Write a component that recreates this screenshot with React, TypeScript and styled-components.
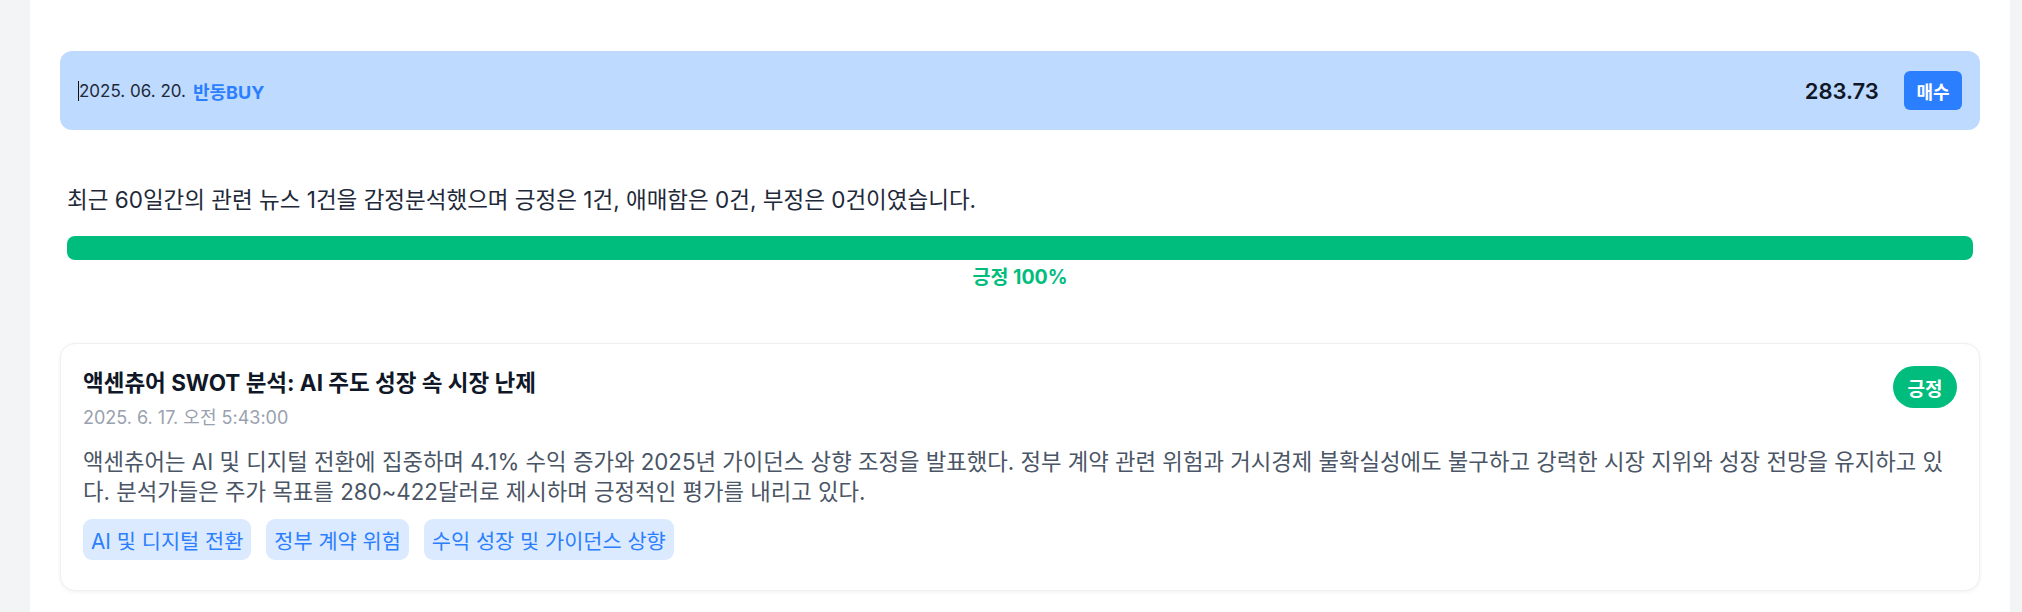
import React from "react";
import styled, { createGlobalStyle } from "styled-components";

const GlobalStyle = createGlobalStyle`
  html, body {
    margin: 0;
    padding: 0;
    background: #f3f4f6;
    font-family: Inter, "Noto Sans CJK KR", sans-serif;
  }
  * { box-sizing: border-box; }
`;

const Page = styled.div`
  display: flex;
  padding: 0 12px 0 30px;
  height: 612px;
  overflow: hidden;
`;

const Panel = styled.main`
  flex: 1;
  background: #ffffff;
  padding: 51px 30px 0 30px;
`;

const SignalBar = styled.div`
  display: flex;
  align-items: center;
  justify-content: space-between;
  height: 79px;
  padding: 0 18px 0 18px;
  border-radius: 12px;
  background: #bedbff;
`;

const SignalLeft = styled.div`
  display: flex;
  align-items: center;
`;

const Caret = styled.span`
  display: inline-block;
  width: 1px;
  height: 20px;
  background: #111;
`;

const SignalDate = styled.span`
  font-size: 17px;
  color: #1e2939;
`;

const SignalName = styled.span`
  margin-left: 7px;
  font-size: 18px;
  font-weight: 700;
  color: #2b7fff;
`;

const SignalRight = styled.div`
  display: flex;
  align-items: center;
  gap: 25px;
`;

const Price = styled.span`
  font-size: 22px;
  font-weight: 600;
  color: #101828;
`;

const ActionBadge = styled.span`
  display: inline-flex;
  align-items: center;
  justify-content: center;
  height: 39px;
  padding: 0 12.5px;
  border-radius: 6px;
  background: #2b7fff;
  color: #ffffff;
  font-size: 18px;
  font-weight: 700;
`;

const Summary = styled.section`
  margin-top: 55px;
  padding: 0 7px;
`;

const SummaryText = styled.p`
  margin: 0;
  font-size: 22.5px;
  line-height: 30px;
  color: #1e2939;
`;

const Track = styled.div`
  margin-top: 21px;
  height: 24px;
  border-radius: 8px;
  background: #e5e7eb;
  display: flex;
  overflow: hidden;
`;

const Fill = styled.div<{ $color: string }>`
  height: 100%;
  background: ${(p) => p.$color};
`;

const RatioLabel = styled.div`
  margin-top: 5px;
  text-align: center;
  font-size: 19.5px;
  line-height: 24px;
  font-weight: 700;
  color: #00bc7d;
`;

const NewsCard = styled.article`
  margin-top: 54px;
  padding: 22px 22px 30px 22px;
  border: 1px solid #eef0f3;
  border-radius: 15px;
  background: #ffffff;
  box-shadow: 0 1px 4px rgba(0, 0, 0, 0.06);
`;

const CardHead = styled.div`
  display: flex;
  justify-content: space-between;
  align-items: flex-start;
`;

const HeadText = styled.div`
  display: flex;
  flex-direction: column;
`;

const Title = styled.h3`
  margin: 0;
  font-size: 22.5px;
  line-height: 34px;
  font-weight: 700;
  color: #101828;
`;

const NewsDate = styled.div`
  margin-top: 5px;
  font-size: 18px;
  line-height: 26px;
  color: #99a1af;
`;

const SentimentBadge = styled.span<{ $color: string }>`
  display: inline-flex;
  align-items: center;
  height: 42px;
  padding: 0 14.5px;
  border-radius: 999px;
  background: ${(p) => p.$color};
  color: #ffffff;
  font-size: 19px;
  font-weight: 700;
`;

const Body = styled.p`
  margin: 16px 0 0 0;
  font-size: 22.3px;
  line-height: 30px;
  color: #4a5565;
`;

const Tags = styled.div`
  display: flex;
  gap: 15px;
  margin-top: 12px;
`;

const Tag = styled.span`
  display: inline-flex;
  align-items: center;
  height: 41px;
  padding: 0 8px;
  border-radius: 9px;
  background: #dbeafe;
  color: #2b7fff;
  font-size: 20.8px;
`;

const tags = ["AI 및 디지털 전환", "정부 계약 위험", "수익 성장 및 가이던스 상향"];

export default function App() {
  const positive = 100;
  return (
    <>
      <GlobalStyle />
      <Page>
        <Panel>
          <SignalBar>
            <SignalLeft>
              <Caret />
              <SignalDate>2025. 06. 20.</SignalDate>
              <SignalName>반동BUY</SignalName>
            </SignalLeft>
            <SignalRight>
              <Price>283.73</Price>
              <ActionBadge>매수</ActionBadge>
            </SignalRight>
          </SignalBar>

          <Summary>
            <SummaryText>
              최근 60일간의 관련 뉴스 1건을 감정분석했으며 긍정은 1건, 애매함은 0건, 부정은 0건이였습니다.
            </SummaryText>
            <Track>
              <Fill $color="#00bc7d" style={{ width: `${positive}%` }} />
            </Track>
            <RatioLabel>긍정 {positive}%</RatioLabel>
          </Summary>

          <NewsCard>
            <CardHead>
              <HeadText>
                <Title>액센츄어 SWOT 분석: AI 주도 성장 속 시장 난제</Title>
                <NewsDate>2025. 6. 17. 오전 5:43:00</NewsDate>
              </HeadText>
              <SentimentBadge $color="#00bc7d">긍정</SentimentBadge>
            </CardHead>
            <Body>
              액센츄어는 AI 및 디지털 전환에 집중하며 4.1% 수익 증가와 2025년 가이던스 상향 조정을 발표했다. 정부 계약 관련 위험과 거시경제 불확실성에도 불구하고 강력한 시장 지위와 성장 전망을 유지하고 있다. 분석가들은 주가 목표를 280~422달러로 제시하며 긍정적인 평가를 내리고 있다.
            </Body>
            <Tags>
              {tags.map((t) => (
                <Tag key={t}>{t}</Tag>
              ))}
            </Tags>
          </NewsCard>
        </Panel>
      </Page>
    </>
  );
}
